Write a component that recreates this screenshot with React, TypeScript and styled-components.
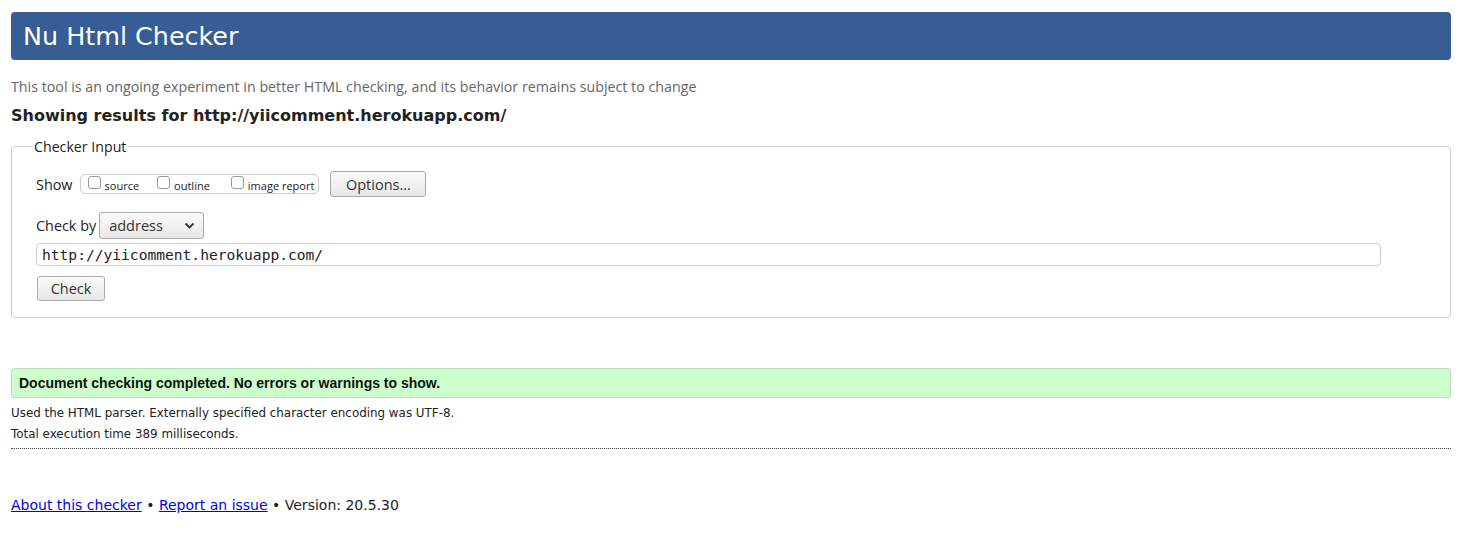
import React from "react";
import styled, { createGlobalStyle } from "styled-components";

const Global = createGlobalStyle`
  html, body { margin: 0; padding: 0; background: #fff; }
  body { font-family: "Open Sans", "DejaVu Sans", sans-serif; color: #222; }
`;

const Page = styled.div`
  padding: 12px 11px 20px 11px;
  display: flex;
  flex-direction: column;
`;

const Header = styled.h1`
  margin: 0;
  height: 48px;
  background: #365d95;
  border-radius: 4px;
  color: #fff;
  font-family: "DejaVu Sans", sans-serif;
  font-weight: normal;
  font-size: 25.4px;
  display: flex;
  align-items: center;
  padding: 0 12px;
`;

const Intro = styled.p`
  margin: 18px 0 0 0;
  color: #666;
  font-size: 14.25px;
  line-height: 17px;
`;

const Showing = styled.h2`
  margin: 11px 0 0 0;
  font-family: "DejaVu Sans", sans-serif;
  font-weight: bold;
  font-size: 16px;
  line-height: 20px;
  color: #222;
`;

const Fieldset = styled.fieldset`
  margin: 11px 0 0 0;
  border: 1px solid #ccc;
  border-radius: 4px;
  padding: 15px 24px 16px 24px;
  display: flex;
  flex-direction: column;
  gap: 0;
`;

const Legend = styled.legend`
  font-size: 14.2px;
  padding: 0 1px;
  margin-left: -3px;
  color: #222;
`;

const Row = styled.div<{ $mt?: number }>`
  display: flex;
  align-items: center;
  gap: 4px;
  margin-top: ${(p) => p.$mt ?? 0}px;
`;

const Label = styled.span`
  font-size: 14.4px;
  color: #222;
`;

const OptGroup = styled.div`
  display: flex;
  align-items: center;
  border: 1px solid #ccc;
  border-radius: 5px;
  height: 18px;
  padding: 0 4px 0 7px;
  margin-left: 3px;
`;

const OptItem = styled.label<{ $gap: number }>`
  display: flex;
  align-items: center;
  font-size: 11px;
  margin-right: ${(p) => p.$gap}px;
  color: #222;
  padding-top: 2px;
`;

const Box = styled.span`
  width: 11px;
  height: 11px;
  border: 1px solid #999;
  border-radius: 3px;
  background: #fff;
  margin-right: 4px;
  position: relative;
  top: -3px;
`;

const Button = styled.button<{ $w: number; $h: number; $ml?: number }>`
  width: ${(p) => p.$w}px;
  height: ${(p) => p.$h}px;
  margin-left: ${(p) => p.$ml ?? 0}px;
  border: 1px solid #aaa;
  border-radius: 3px;
  background: linear-gradient(#fafafa, #e8e8e8);
  font-family: "Open Sans", sans-serif;
  font-size: 14.5px;
  color: #333;
  padding: 0;
`;

const Select = styled.div`
  width: 105px;
  height: 27px;
  box-sizing: border-box;
  margin-left: -1px;
  border: 1px solid #aaa;
  border-radius: 3px;
  background: linear-gradient(#fafafa, #e8e8e8);
  display: flex;
  align-items: center;
  justify-content: space-between;
  padding: 0 8px 0 9px;
  font-size: 14.5px;
  color: #333;
`;

const UrlInput = styled.div`
  margin-top: 4px;
  width: 1345px;
  height: 23px;
  box-sizing: border-box;
  border: 1px solid #ccc;
  border-radius: 4px;
  display: flex;
  align-items: center;
  padding-left: 5px;
  font-family: "DejaVu Sans Mono", monospace;
  font-size: 14.6px;
  color: #222;
`;

const Success = styled.div`
  margin-top: 50px;
  height: 30px;
  box-sizing: border-box;
  background: #ccffcc;
  border: 1px solid #bbddbb;
  border-radius: 3px;
  display: flex;
  align-items: center;
  padding-left: 7px;
  font-family: "Liberation Sans", Arial, sans-serif;
  font-weight: bold;
  font-size: 14px;
  color: #111;
`;

const Detail = styled.p`
  margin: 0;
  font-family: "DejaVu Sans", sans-serif;
  font-size: 11.9px;
  line-height: 21px;
  color: #222;
`;

const Details = styled.div`
  margin-top: 5px;
  padding-bottom: 3px;
  border-bottom: 1px dotted #444;
`;

const Footer = styled.p`
  margin: 48px 0 0 0;
  font-family: "DejaVu Sans", sans-serif;
  font-size: 14px;
  color: #222;
`;

const Link = styled.a`
  color: #0000ee;
  text-decoration: underline;
`;

const Chevron = () => (
  <svg width="11" height="8" viewBox="0 0 11 8">
    <path d="M1.5 1.5 L5.5 5.5 L9.5 1.5" fill="none" stroke="#333" strokeWidth="1.8" />
  </svg>
);

export default function App() {
  return (
    <>
      <Global />
      <Page>
        <Header>Nu Html Checker</Header>
        <Intro>This tool is an ongoing experiment in better HTML checking, and its behavior remains subject to change</Intro>
        <Showing>Showing results for http://yiicomment.herokuapp.com/</Showing>
        <Fieldset>
          <Legend>Checker Input</Legend>
          <Row>
            <Label>Show</Label>
            <OptGroup>
              <OptItem $gap={18}><Box />source</OptItem>
              <OptItem $gap={21}><Box />outline</OptItem>
              <OptItem $gap={0}><Box />image report</OptItem>
            </OptGroup>
            <Button $w={96} $h={26} $ml={7}>Options…</Button>
          </Row>
          <Row $mt={15}>
            <Label>Check by</Label>
            <Select>address<Chevron /></Select>
          </Row>
          <UrlInput>http://yiicomment.herokuapp.com/</UrlInput>
          <Row $mt={10}>
            <Button $w={68} $h={25} $ml={1}>Check</Button>
          </Row>
        </Fieldset>
        <Success>Document checking completed. No errors or warnings to show.</Success>
        <Details>
          <Detail>Used the HTML parser. Externally specified character encoding was UTF-8.</Detail>
          <Detail>Total execution time 389 milliseconds.</Detail>
        </Details>
        <Footer>
          <Link href="#">About this checker</Link> • <Link href="#">Report an issue</Link> • Version: 20.5.30
        </Footer>
      </Page>
    </>
  );
}
